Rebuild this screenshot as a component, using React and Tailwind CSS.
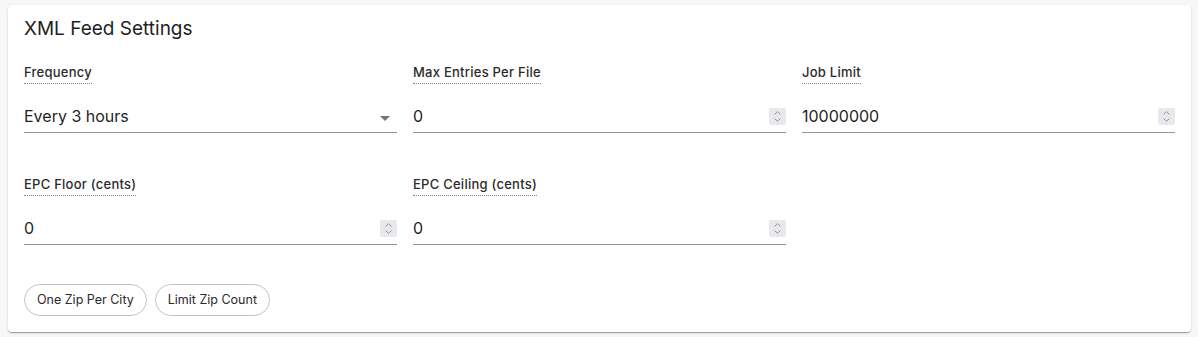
import React from "react";

const font = { fontFamily: "Inter, 'Noto Sans', 'Liberation Sans', sans-serif" };

function Spinner() {
  return (
    <div className="flex h-[17px] w-[17px] flex-col items-center justify-center gap-[3px] rounded-[2px] bg-[#e9e9ed]">
      <svg width="7" height="4" viewBox="0 0 7 4" fill="none">
        <path d="M0.5 3.5L3.5 0.7L6.5 3.5" stroke="#8a8a8e" strokeWidth="0.9" />
      </svg>
      <svg width="7" height="4" viewBox="0 0 7 4" fill="none">
        <path d="M0.5 0.5L3.5 3.3L6.5 0.5" stroke="#8a8a8e" strokeWidth="0.9" />
      </svg>
    </div>
  );
}

function Field({ label, value, select }) {
  return (
    <div className="flex flex-col items-start">
      <span className="inline-block border-b border-dotted border-[#8a8a8a] pb-[3px] text-[13px] leading-[16px] font-medium tracking-[0.25px] text-[#2b2b2b]">
        {label}
      </span>
      <div className="mt-4 flex h-[33px] w-full items-center justify-between border-b border-[#949494]">
        <span className="text-[16px] leading-[32px] text-[#1f1f1f]">{value}</span>
        {select ? (
          <svg width="10" height="5" viewBox="0 0 10 5" className="mr-[7px] mt-[4px]">
            <path d="M0 0L5 5L10 0Z" fill="#757575" />
          </svg>
        ) : (
          <Spinner />
        )}
      </div>
    </div>
  );
}

function Chip({ children }) {
  return (
    <button className="h-[32px] rounded-full border border-[#c4c4c4] px-[12px] text-[12.5px] text-[#2b2b2b]">
      {children}
    </button>
  );
}

export default function App() {
  return (
    <div className="h-[337px] w-full bg-[#f7f7f7] pl-2 pr-[7px] pt-[5px]" style={font}>
      <div className="rounded-[4px] bg-white px-4 pt-3 pb-4 shadow-[0_2px_1px_-1px_rgba(0,0,0,0.2),0_1px_1px_0_rgba(0,0,0,0.14),0_1px_3px_0_rgba(0,0,0,0.12)]">
        <h2 className="text-[19px] leading-[24px] font-normal text-[#1f1f1f]">XML Feed Settings</h2>
        <div className="mt-[23px] grid grid-cols-3 gap-x-4 gap-y-[43px]">
          <Field label="Frequency" value="Every 3 hours" select />
          <Field label="Max Entries Per File" value="0" />
          <Field label="Job Limit" value="10000000" />
          <Field label="EPC Floor (cents)" value="0" />
          <Field label="EPC Ceiling (cents)" value="0" />
        </div>
        <div className="mt-[39px] flex gap-2">
          <Chip>One Zip Per City</Chip>
          <Chip>Limit Zip Count</Chip>
        </div>
      </div>
    </div>
  );
}
